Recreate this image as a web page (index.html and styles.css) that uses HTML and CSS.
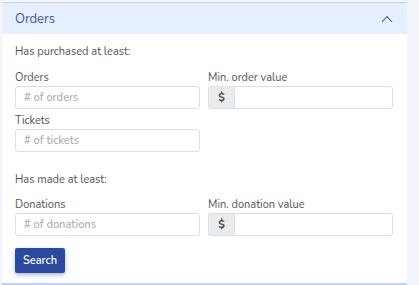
FILE: index.html
```html
<!DOCTYPE html>
<html>
<head>
<meta charset="utf-8">
<link rel="stylesheet" href="styles.css">
</head>
<body>
<div class="card">
  <div class="card-header">
    <span class="card-title">Orders</span>
    <svg class="chevron" width="12" height="8" viewBox="0 0 12 8"><path d="M1 7 L6 1.5 L11 7" fill="none" stroke="#555" stroke-width="1.1"/></svg>
  </div>
  <div class="card-body">
    <p class="section-title">Has purchased at least:</p>
    <div class="grid grid-first">
      <div class="field">
        <label class="label">Orders</label>
        <input class="input" placeholder="# of orders">
      </div>
      <div class="field">
        <label class="label">Min. order value</label>
        <div class="group"><span class="addon">$</span><input class="input input-grouped"></div>
      </div>
      <div class="field">
        <label class="label">Tickets</label>
        <input class="input" placeholder="# of tickets">
      </div>
    </div>
    <p class="section-title section-second">Has made at least:</p>
    <div class="grid grid-second">
      <div class="field">
        <label class="label">Donations</label>
        <input class="input" placeholder="# of donations">
      </div>
      <div class="field">
        <label class="label">Min. donation value</label>
        <div class="group"><span class="addon">$</span><input class="input input-grouped"></div>
      </div>
    </div>
    <button class="btn">Search</button>
  </div>
</div>
</body>
</html>
```
FILE: styles.css
```css
* { box-sizing: border-box; }
html, body { margin: 0; padding: 0; }
body {
  background: #f3f5fa;
  font-family: "Nunito", "Lato", "Open Sans", sans-serif;
  font-size: 11px;
  color: #555;
  width: 419px;
  height: 285px;
  overflow: hidden;
}
.card {
  margin: 2px 0 0 2px;
  width: 405px;
  background: #fff;
  border-top: 1px solid #c9d2e6;
  border-bottom: 2px solid #bcd3f7;
}
.card-header {
  height: 31px;
  background: #e5effd;
  display: flex;
  align-items: center;
  justify-content: space-between;
  padding: 0 14px 0 13px;
}
.card-title {
  font-size: 13px;
  color: #465696;
}
.chevron { display: block; }
.card-body {
  padding: 10px 14px 10px 13px;
}
.section-title {
  margin: 0;
  line-height: 16px;
  color: #555;
}
.section-second { margin-top: 20px; }
.grid {
  display: grid;
  grid-template-columns: 185px 185px;
  column-gap: 8px;
  row-gap: 4px;
}
.grid-first { margin-top: 10px; }
.grid-second { margin-top: 9px; }
.field { display: flex; flex-direction: column; }
.label {
  line-height: 16px;
  color: #555;
}
.input {
  height: 23px;
  width: 100%;
  border: 1px solid #dcdfe4;
  border-radius: 3px;
  padding: 0 8px;
  font-family: inherit;
  font-size: 11px;
  color: #555;
  background: #fff;
  outline: none;
}
.input::placeholder { color: #aeb2b8; font-weight: 600; }
.group { display: flex; height: 23px; }
.addon {
  width: 26px;
  flex: none;
  background: #e9ecef;
  border: 1px solid #dcdfe4;
  border-right: none;
  border-radius: 3px 0 0 3px;
  display: flex;
  align-items: center;
  justify-content: center;
  font-weight: 700;
  color: #444;
  font-size: 11px;
}
.input-grouped { border-radius: 0 3px 3px 0; }
.btn {
  margin-top: 12px;
  width: 50px;
  height: 25px;
  background: #2b4a9f;
  color: #fff;
  border: none;
  border-radius: 2px;
  font-family: inherit;
  font-size: 11px;
  font-weight: 600;
  box-shadow: 0 2px 4px rgba(30, 50, 120, 0.35);
  padding: 0;
  display: block;
}
```
